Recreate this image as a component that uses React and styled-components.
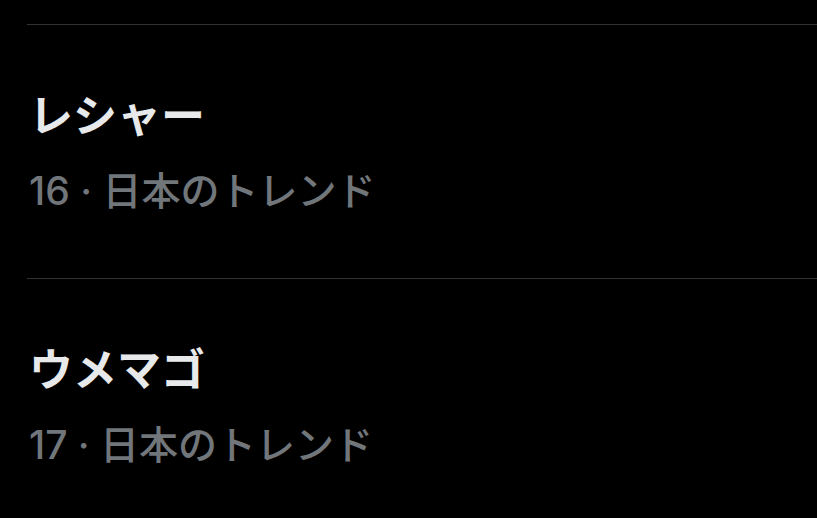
import React from "react";
import styled, { createGlobalStyle } from "styled-components";

const Global = createGlobalStyle`
  html, body { margin: 0; padding: 0; background: #000; }
  body { font-family: Inter, "Noto Sans CJK JP", sans-serif; }
`;

const List = styled.div`
  padding-top: 24px;
  padding-left: 27px;
  height: 518px;
  box-sizing: border-box;
  overflow: hidden;
`;

const Row = styled.div`
  border-top: 1px solid #2f3336;
  height: 254px;
  box-sizing: border-box;
  padding: 59px 0 0 2px;
  display: flex;
  flex-direction: column;
  gap: 24px;
`;

const Title = styled.div`
  color: #e7e9ea;
  font-family: "Noto Sans CJK JP", sans-serif;
  font-size: 44px;
  font-weight: 700;
  line-height: 58px;
`;

const Meta = styled.div`
  color: #71767b;
  font-family: Inter, "Noto Sans CJK JP", sans-serif;
  font-size: 39px;
  font-weight: 500;
  line-height: 50px;
  white-space: nowrap;
`;

const items = [
  { title: "レシャー", rank: 16 },
  { title: "ウメマゴ", rank: 17 },
];

export default function App() {
  return (
    <>
      <Global />
      <List>
        {items.map((it) => (
          <Row key={it.rank}>
            <Title>{it.title}</Title>
            <Meta>{it.rank} · 日本のトレンド</Meta>
          </Row>
        ))}
      </List>
    </>
  );
}
